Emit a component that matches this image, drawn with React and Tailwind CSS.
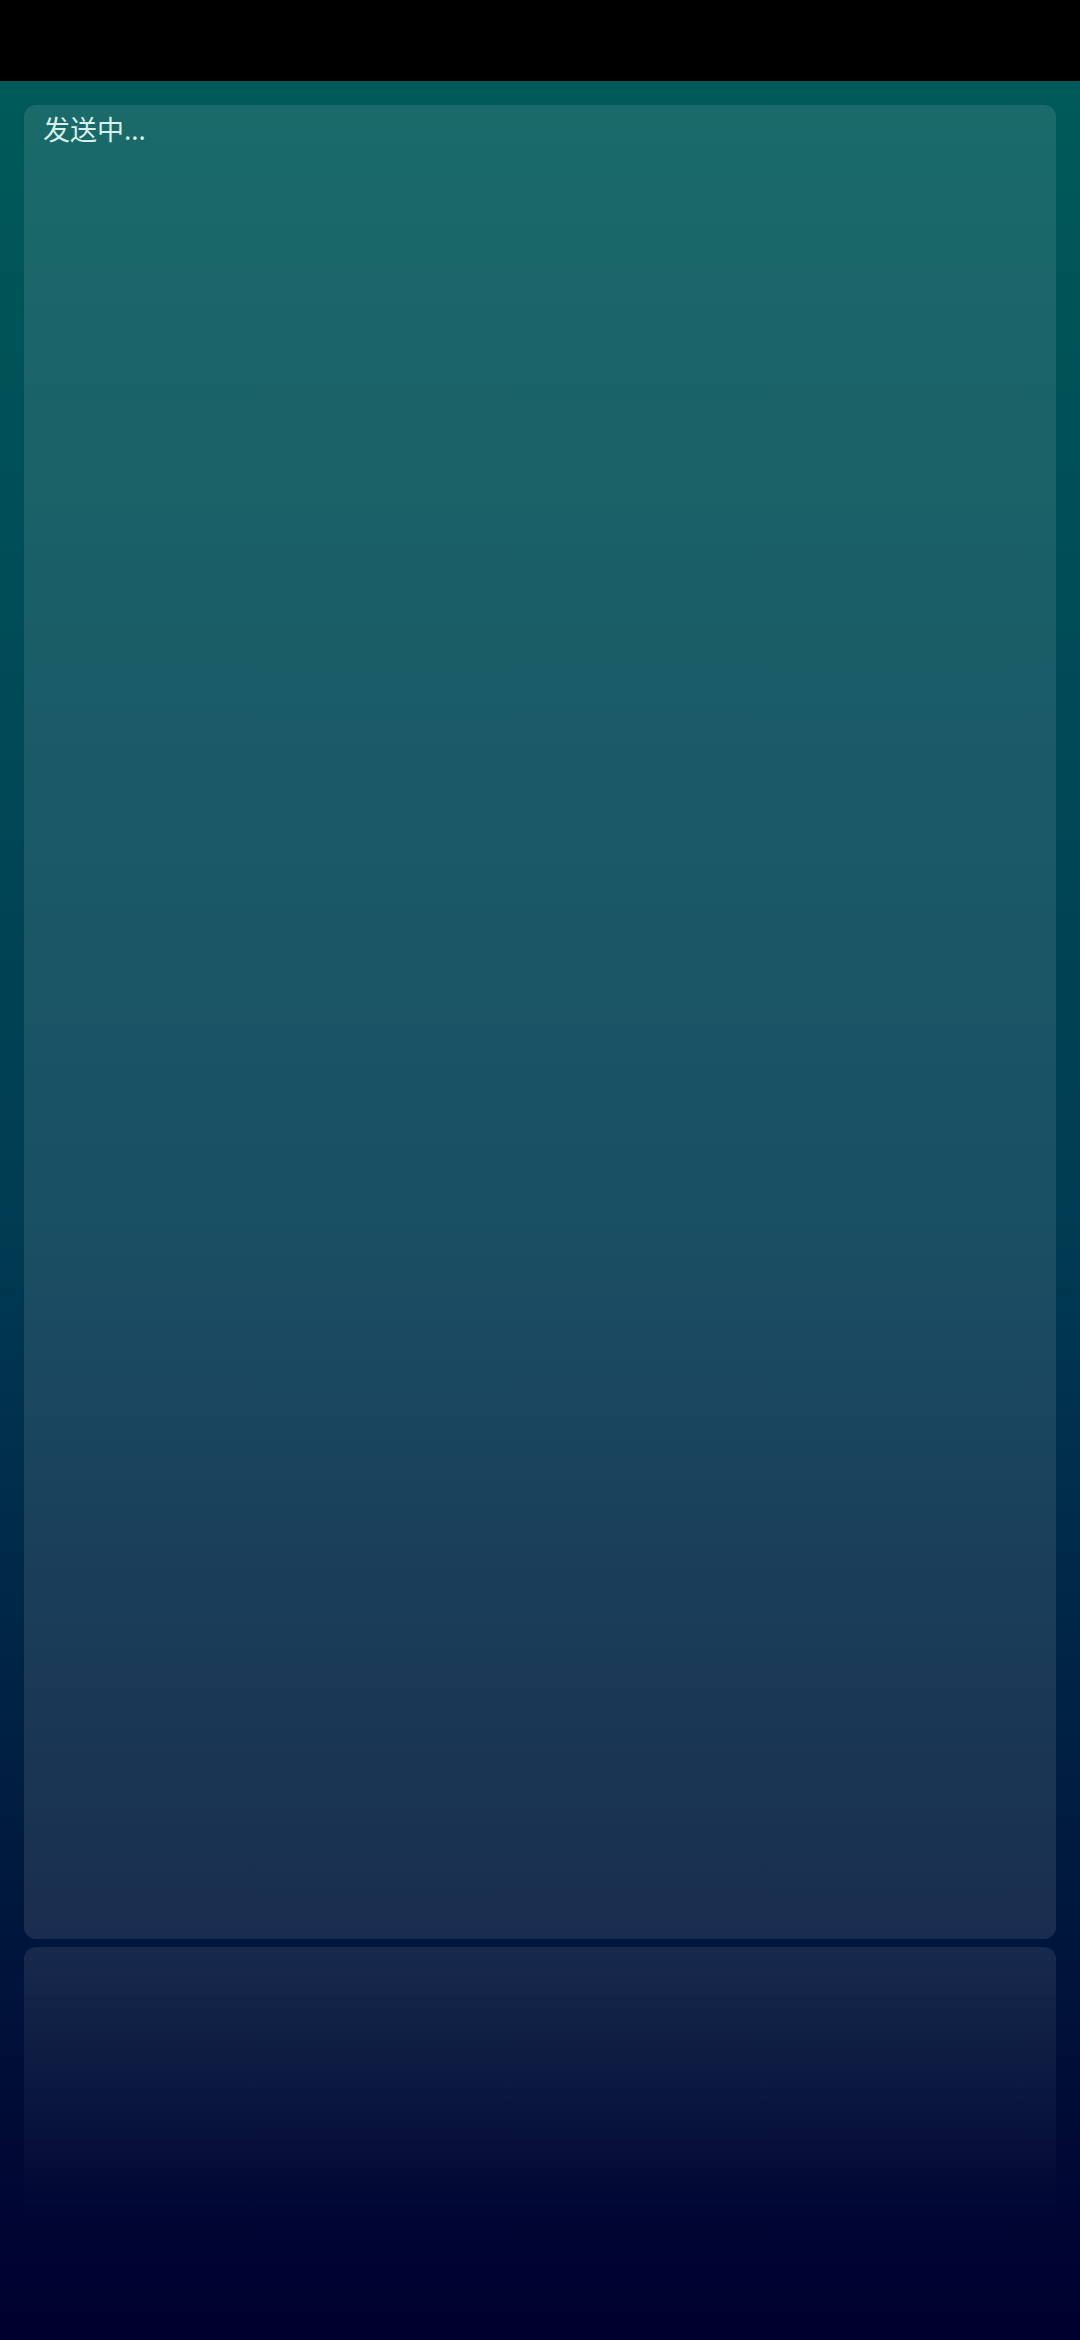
export default function App() {
  return (
    <div className="w-[1080px] h-[2340px] flex flex-col bg-black overflow-hidden" style={{ fontFamily: '"Noto Sans", "Noto Sans CJK SC", sans-serif' }}>
      <div className="h-[81px] shrink-0 bg-black" />
      <div className="flex-1 flex flex-col px-[24px] pt-[24px] gap-[8px] bg-gradient-to-b from-[#005a59] via-[#003c53] to-[#00002e]">
        <div className="h-[1834px] shrink-0 rounded-xl bg-white/10 pt-[7px] pl-[19px]">
          <span className="text-[27px] leading-[36px] text-[#d9efea]">发送中...</span>
        </div>
        <div className="flex-1 rounded-t-xl bg-gradient-to-b from-white/[0.09] to-transparent to-[70%]" />
      </div>
    </div>
  );
}
